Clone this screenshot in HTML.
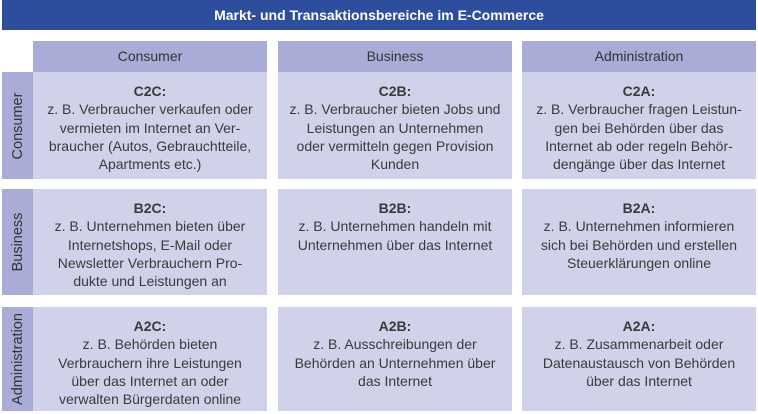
<!DOCTYPE html>
<html><head><meta charset="utf-8"><style>
*{margin:0;padding:0;box-sizing:border-box}
body{width:758px;height:414px;background:#fff;font-family:"Liberation Sans",sans-serif;color:#3a3a3a;position:relative;overflow:hidden}
.t{position:absolute;left:2px;top:0;width:754px;height:30px;background:#2d4e9c;color:#fff;font-size:14px;font-weight:bold;text-align:center;line-height:31px}
.h{position:absolute;top:41px;height:31px;background:#a9acd6;font-size:14px;text-align:center;line-height:31px;color:#333}
.c{position:absolute;background:#d0d2ea;font-size:14px;text-align:center;line-height:18.3px;padding-top:10px}
.c b{font-weight:bold}
.l{position:absolute;left:2px;width:31px;background:#a9acd6;font-size:14.5px;color:#333}
.l span{position:absolute;left:50%;top:50%;transform:translate(-50%,-50%) rotate(-90deg);white-space:nowrap}
</style></head><body>
<div class="t">Markt- und Transaktionsbereiche im E-Commerce</div>
<div class="h" style="left:33px;width:234px">Consumer</div>
<div class="h" style="left:278px;width:234px">Business</div>
<div class="h" style="left:522px;width:234px">Administration</div>

<div class="l" style="top:72px;height:107px"><span>Consumer</span></div>
<div class="l" style="top:189px;height:106px"><span>Business</span></div>
<div class="l" style="top:307px;height:104px"><span>Administration</span></div>

<div class="c" style="left:33px;top:72px;width:234px;height:107px"><b>C2C:</b><br>z. B. Verbraucher verkaufen oder<br>vermieten im Internet an Ver-<br>braucher (Autos, Gebrauchtteile,<br>Apartments etc.)</div>
<div class="c" style="left:278px;top:72px;width:234px;height:107px"><b>C2B:</b><br>z. B. Verbraucher bieten Jobs und<br>Leistungen an Unternehmen<br>oder vermitteln gegen Provision<br>Kunden</div>
<div class="c" style="left:522px;top:72px;width:234px;height:107px"><b>C2A:</b><br>z. B. Verbraucher fragen Leistun-<br>gen bei Behörden über das<br>Internet ab oder regeln Behör-<br>dengänge über das Internet</div>

<div class="c" style="left:33px;top:189px;width:234px;height:106px"><b>B2C:</b><br>z. B. Unternehmen bieten über<br>Internetshops, E-Mail oder<br>Newsletter Verbrauchern Pro-<br>dukte und Leistungen an</div>
<div class="c" style="left:278px;top:189px;width:234px;height:106px"><b>B2B:</b><br>z. B. Unternehmen handeln mit<br>Unternehmen über das Internet</div>
<div class="c" style="left:522px;top:189px;width:234px;height:106px"><b>B2A:</b><br>z. B. Unternehmen informieren<br>sich bei Behörden und erstellen<br>Steuerklärungen online</div>

<div class="c" style="left:33px;top:307px;width:234px;height:104px"><b>A2C:</b><br>z. B. Behörden bieten<br>Verbrauchern ihre Leistungen<br>über das Internet an oder<br>verwalten Bürgerdaten online</div>
<div class="c" style="left:278px;top:307px;width:234px;height:104px"><b>A2B:</b><br>z. B. Ausschreibungen der<br>Behörden an Unternehmen über<br>das Internet</div>
<div class="c" style="left:522px;top:307px;width:234px;height:104px"><b>A2A:</b><br>z. B. Zusammenarbeit oder<br>Datenaustausch von Behörden<br>über das Internet</div>
</body></html>
